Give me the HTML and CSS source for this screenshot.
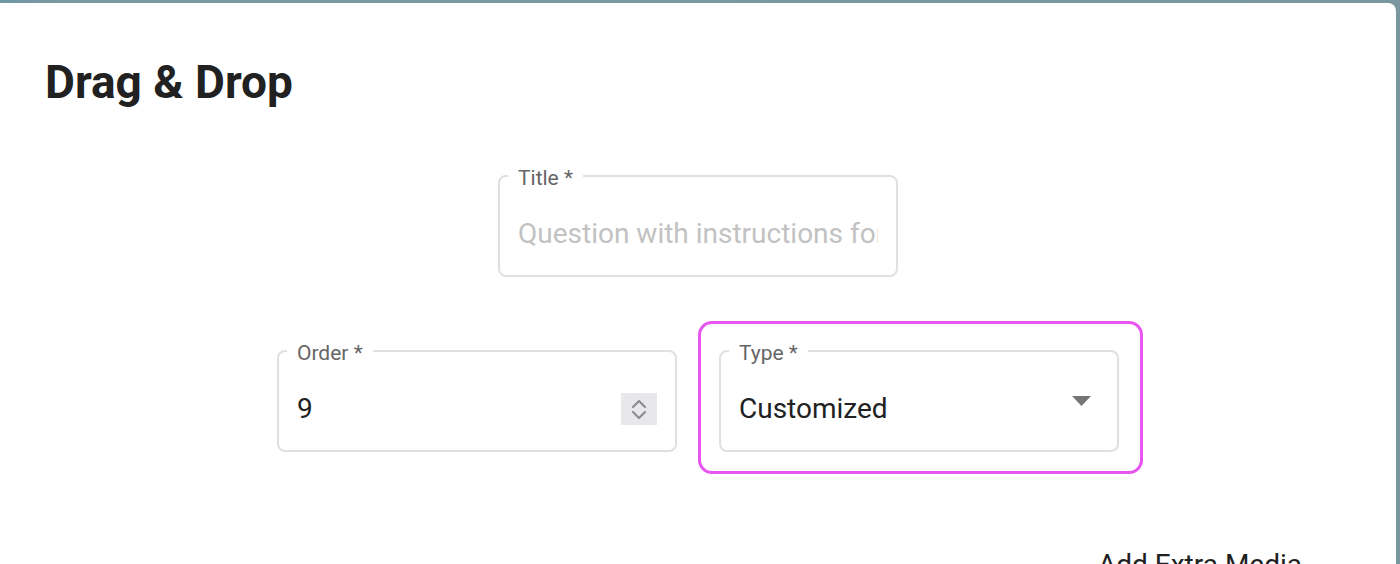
FILE: index.html
```html
<!DOCTYPE html>
<html lang="en">
<head>
<meta charset="utf-8">
<title>Drag &amp; Drop</title>
<link rel="stylesheet" href="styles.css">
</head>
<body>
<div class="card">
  <h1 class="heading">Drag &amp; Drop</h1>

  <div class="row row-title">
    <div class="field">
      <span class="label">Title *</span>
      <div class="control">
        <span class="value placeholder">Question with instructions for the student</span>
      </div>
    </div>
  </div>

  <div class="row row-fields">
    <div class="field">
      <span class="label">Order *</span>
      <div class="control">
        <span class="value">9</span>
        <span class="spinner">
          <svg width="16" height="24" viewBox="0 0 16 24" aria-hidden="true">
            <path d="M2 10 L8 4 L14 10" fill="none" stroke="#8c8c92" stroke-width="2.2" stroke-linecap="round" stroke-linejoin="round"/>
            <path d="M2 15 L8 21 L14 15" fill="none" stroke="#8c8c92" stroke-width="2.2" stroke-linecap="round" stroke-linejoin="round"/>
          </svg>
        </span>
      </div>
    </div>
    <div class="field highlighted">
      <span class="label">Type *</span>
      <div class="control">
        <span class="value">Customized</span>
        <svg class="arrow" width="19" height="10" viewBox="0 0 19 10" aria-hidden="true">
          <path d="M0 0 L19 0 L9.5 10 Z" fill="#757575"/>
        </svg>
      </div>
    </div>
  </div>

  <div class="row row-media">
    <span class="media-link">Add Extra Media</span>
  </div>
</div>
</body>
</html>
```
FILE: styles.css
```css
html, body {
  margin: 0;
  padding: 0;
  height: 100%;
  overflow: hidden;
}

body {
  background: linear-gradient(90deg, #6f97a6 0, #7a989f 60px, #7a979f 100%);
  font-family: Roboto, "Liberation Sans", Arial, sans-serif;
  color: #212121;
}

.card {
  margin-top: 3px;
  width: 1396px;
  height: 100%;
  background: #ffffff;
  border-top-right-radius: 8px;
  padding-top: 53px;
  box-sizing: border-box;
}

.heading {
  margin: 0 0 0 45px;
  font-size: 46px;
  line-height: 53px;
  font-weight: 700;
  color: #212121;
  letter-spacing: 0;
}

.row {
  display: flex;
  justify-content: center;
}

.row-title {
  margin-top: 66px;
}

.row-fields {
  margin-top: 73px;
  gap: 42px;
}

.field {
  position: relative;
  width: 400px;
  height: 102px;
  box-sizing: border-box;
  border: 2px solid #e0e0e0;
  border-radius: 8px;
  background: #fff;
}

.label {
  position: absolute;
  top: -10px;
  left: 8px;
  padding: 0 10px;
  background: #fff;
  font-size: 21px;
  line-height: 22px;
  color: #666666;
  white-space: nowrap;
}

.control {
  display: flex;
  align-items: center;
  padding: 40px 18px 0 18px;
  height: 33px;
}

.value {
  flex: 1 1 auto;
  min-width: 0;
  font-size: 28px;
  line-height: 33px;
  color: #212121;
  white-space: nowrap;
  overflow: hidden;
}

.placeholder {
  color: #c2c2c2;
}

.spinner {
  flex: 0 0 auto;
  width: 36px;
  height: 32px;
  background: #e8e8eb;
  display: flex;
  align-items: center;
  justify-content: center;
}

.spinner svg {
  display: block;
}

.arrow {
  flex: 0 0 auto;
  display: block;
  margin-right: 8px;
  margin-bottom: 15px;
}

.highlighted::after {
  content: "";
  position: absolute;
  top: -31px;
  left: -23px;
  right: -26px;
  bottom: -24px;
  border: 3px solid #e855f0;
  border-radius: 14px;
  pointer-events: none;
}

.row-media {
  justify-content: flex-end;
  padding-right: 94px;
  margin-top: 96px;
}

.media-link {
  font-size: 28px;
  line-height: 33px;
  color: #212121;
}
```
